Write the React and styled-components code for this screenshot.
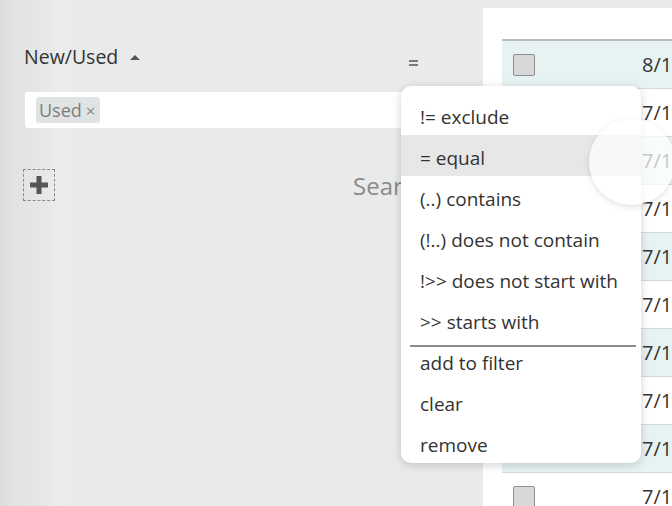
import React from "react";
import styled, { createGlobalStyle } from "styled-components";

const GlobalStyle = createGlobalStyle`
  html, body {
    margin: 0;
    padding: 0;
    background: #e9eaea;
    font-family: "Open Sans", "Noto Sans", sans-serif;
    color: #333;
  }
  #root {
    height: 506px;
    overflow: hidden;
  }
`;

const Page = styled.div`
  position: relative;
  display: grid;
  grid-template-columns: 483px 1fr;
  height: 506px;
  overflow: hidden;
  background: linear-gradient(
    to right,
    #dcdddd 0px,
    #e2e3e3 14px,
    #e6e7e7 44px,
    #ebecec 60px,
    #e9eaea 76px
  );
`;

const FilterColumn = styled.div`
  padding: 43px 51px 0 24px;
  display: flex;
  flex-direction: column;
`;

const FieldHeader = styled.div`
  display: flex;
  align-items: center;
  height: 27px;
  padding-right: 14px;
`;

const FieldLabel = styled.span`
  font-size: 19.5px;
  color: #333;
`;

const Caret = styled.span`
  width: 0;
  height: 0;
  margin-left: 12px;
  margin-top: 1px;
  border-left: 5px solid transparent;
  border-right: 5px solid transparent;
  border-bottom: 5px solid #555;
`;

const OperatorIcon = styled.svg`
  margin-left: auto;
  margin-top: 12px;
`;

const TagInput = styled.div`
  margin-top: 22px;
  height: 36px;
  margin-left: 1px;
  background: #fff;
  border-radius: 3px;
  display: flex;
  align-items: center;
  padding-left: 11px;
`;

const Tag = styled.span`
  display: inline-flex;
  align-items: center;
  height: 26px;
  padding: 0 4px 0 3px;
  background: #e0e3e3;
  border-radius: 3px;
  color: #7d7d7d;
  font-size: 18px;
  gap: 4px;
`;

const TagClose = styled.span`
  font-size: 17px;
  color: #888;
`;

const ActionRow = styled.div`
  margin-top: 41px;
  display: flex;
  align-items: center;
  height: 32px;
`;

const AddButton = styled.div`
  width: 32px;
  height: 32px;
  box-sizing: border-box;
  margin-left: -1px;
  border: 1.5px dashed #8a8a8a;
  display: flex;
  align-items: center;
  justify-content: center;
`;

const SearchLabel = styled.span`
  margin-left: 298px;
  font-size: 24px;
  color: #8a8a8a;
  white-space: nowrap;
`;

const TablePanel = styled.div`
  margin-top: 8px;
  background: #fff;
  padding: 31px 0 0 19px;
`;

const Table = styled.div`
  border-top: 2px solid #bdbdbd;
`;

const Row = styled.div`
  display: grid;
  grid-template-columns: 140px 1fr;
  align-items: center;
  height: 48px;
  box-sizing: border-box;
  border-bottom: 1px solid #d2dada;
  background: ${(p) => (p.$striped ? "#e7f2f2" : "#fff")};
`;

const CheckBox = styled.span`
  width: 22px;
  height: 22px;
  box-sizing: border-box;
  margin-left: 11px;
  background: #d8d8d8;
  border: 1.5px solid #8f8f8f;
  border-radius: 2px;
`;

const DateCell = styled.span`
  font-size: 20px;
  color: #333;
  white-space: nowrap;
`;

const Menu = styled.div`
  position: absolute;
  left: 401px;
  top: 86px;
  width: 240px;
  height: 377px;
  box-sizing: border-box;
  padding-top: 8px;
  background: #fff;
  border-radius: 10px;
  box-shadow: 0 2px 10px rgba(0, 0, 0, 0.18);
  overflow: hidden;
  z-index: 2;
`;

const MenuItem = styled.div`
  height: 41px;
  box-sizing: border-box;
  padding: 5px 0 0 19px;
  display: flex;
  align-items: center;
  font-size: 19px;
  color: #333;
  white-space: nowrap;
  background: ${(p) => (p.$active ? "#e7e7e7" : "transparent")};
`;

const MenuDivider = styled.div`
  height: 2px;
  margin: 5px 5px -7px 9px;
  background: #8c8c8c;
`;

const TouchRipple = styled.div`
  position: absolute;
  left: 589px;
  top: 119px;
  width: 86px;
  height: 86px;
  border-radius: 50%;
  background: rgba(255, 255, 255, 0.72);
  box-shadow: 0 2px 6px rgba(0, 0, 0, 0.12);
  z-index: 3;
`;

const operators = [
  "!= exclude",
  "= equal",
  "(..) contains",
  "(!..) does not contain",
  "!>> does not start with",
  ">> starts with",
];

const actions = ["add to filter", "clear", "remove"];

const dates = ["8/1", "7/1", "7/1", "7/1", "7/1", "7/1", "7/1", "7/1", "7/1", "7/1"];

export default function App() {
  return (
    <>
      <GlobalStyle />
      <Page>
        <FilterColumn>
          <FieldHeader>
            <FieldLabel>New/Used</FieldLabel>
            <Caret />
            <OperatorIcon width="9" height="6" viewBox="0 0 9 6">
              <rect x="0" y="0" width="9" height="2" fill="#7a7a7a" />
              <rect x="0" y="4" width="9" height="2" fill="#7a7a7a" />
            </OperatorIcon>
          </FieldHeader>
          <TagInput>
            <Tag>
              Used <TagClose>×</TagClose>
            </Tag>
          </TagInput>
          <ActionRow>
            <AddButton>
              <svg width="18" height="18" viewBox="0 0 18 18">
                <rect x="6.5" y="0" width="5" height="18" fill="#555" />
                <rect x="0" y="6.5" width="18" height="5" fill="#555" />
              </svg>
            </AddButton>
            <SearchLabel>Search</SearchLabel>
          </ActionRow>
        </FilterColumn>
        <TablePanel>
          <Table>
            {dates.map((d, i) => (
              <Row key={i} $striped={i % 2 === 0}>
                {i === 0 || i === 9 ? <CheckBox /> : <span />}
                <DateCell>{d}</DateCell>
              </Row>
            ))}
          </Table>
        </TablePanel>
        <Menu>
          {operators.map((o) => (
            <MenuItem key={o} $active={o === "= equal"}>
              {o}
            </MenuItem>
          ))}
          <MenuDivider />
          {actions.map((a) => (
            <MenuItem key={a}>{a}</MenuItem>
          ))}
        </Menu>
        <TouchRipple />
      </Page>
    </>
  );
}
